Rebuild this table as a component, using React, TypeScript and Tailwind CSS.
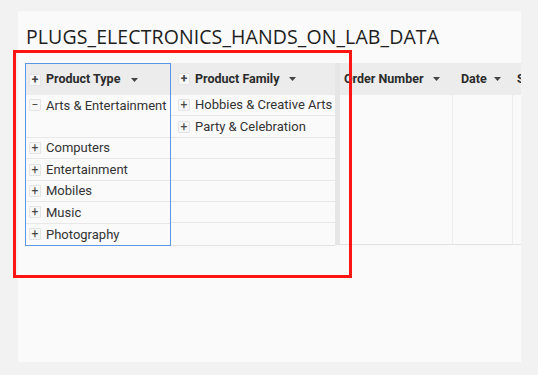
import React from 'react';

const productTypes = ['Computers', 'Entertainment', 'Mobiles', 'Music', 'Photography'];

function ToggleBox({ open = false }: { open?: boolean }) {
    return (
        <span className="flex h-[12px] w-[12px] shrink-0 items-center justify-center rounded-[1px] border border-[#e4e4e4] bg-[#f7f7f7] text-[12px] leading-none text-[#444]">
            {open ? '−' : '+'}
        </span>
    );
}

function Caret() {
    return (
        <svg width="7" height="4" viewBox="0 0 7 4" className="shrink-0">
            <path d="M0 0h7L3.5 4z" fill="#444" />
        </svg>
    );
}

export default function App() {
    return (
        <div className="relative h-[375px] w-[538px] overflow-hidden bg-[#f2f2f2] pl-[18px] pt-[11px]" style={{ fontFamily: 'Roboto, sans-serif' }}>
            <div className="h-[351px] w-[503px] bg-[#fafafa] pl-[7px]">
                <h1 className="pt-[13px] pl-[1px] text-[19.5px] leading-[26px] tracking-[0.1px] text-[#1e1e1e]" style={{ fontFamily: '"Open Sans", sans-serif' }}>
                    PLUGS_ELECTRONICS_HANDS_ON_LAB_DATA
                </h1>

                <div className="mt-[13px] flex w-[496px] text-[13px] text-[#333]">
                    {/* Product Type column (selected) */}
                    <div className="w-[146px] shrink-0 border border-[#5a97e6]">
                        <div className="flex h-[31px] items-center gap-[5px] bg-[#ececec] pl-[3px] text-[12.5px] font-bold text-[#2b2b2b]">
                            <ToggleBox />
                            <span>Product Type</span>
                            <span className="ml-[6px]"><Caret /></span>
                        </div>
                        <div className="flex h-[43px] items-start gap-[5px] border-b border-[#e8e8e8] pl-[3px] pt-[4px]">
                            <ToggleBox open />
                            <span className="-mt-[3px]">Arts &amp; Entertainment</span>
                        </div>
                        {productTypes.map((t, i) => (
                            <div key={t} className={`flex h-[21.4px] items-center gap-[5px] pl-[3px] ${i < productTypes.length - 1 ? 'border-b border-[#e8e8e8]' : ''}`}>
                                <ToggleBox />
                                <span>{t}</span>
                            </div>
                        ))}
                    </div>

                    {/* Product Family column */}
                    <div className="w-[164px] shrink-0 border-b border-[#e2e2e2]">
                        <div className="flex h-[32px] items-center gap-[5px] bg-[#ececec] pl-[7px] text-[12.5px] font-bold text-[#2b2b2b]">
                            <ToggleBox />
                            <span>Product Family</span>
                            <span className="ml-[5px]"><Caret /></span>
                        </div>
                        {['Hobbies & Creative Arts', 'Party & Celebration'].map((f) => (
                            <div key={f} className="flex h-[21.4px] items-center gap-[5px] border-b border-[#e8e8e8] pl-[7px]">
                                <ToggleBox />
                                <span>{f}</span>
                            </div>
                        ))}
                        {[0, 1, 2, 3, 4].map((i) => (
                            <div key={i} className={`h-[21.4px] ${i < 4 ? 'border-b border-[#e8e8e8]' : ''}`} />
                        ))}
                    </div>

                    {/* frozen pane divider */}
                    <div className="h-[182px] w-[5px] shrink-0 border-b border-[#e2e2e2] bg-[#e6e6e6]" />

                    {/* scrolled value columns */}
                    <div className="h-[182px] w-[181px] overflow-hidden border-b border-[#e2e2e2]">
                        <div className="-ml-[10px] flex h-full w-[260px] text-[12.5px] font-bold text-[#2b2b2b]">
                            <div className="w-[123px] shrink-0 border-r border-[#ececec]">
                                <div className="flex h-[32px] items-center gap-[9px] bg-[#ececec] pl-[14px]">
                                    <span>Order Number</span>
                                    <Caret />
                                </div>
                            </div>
                            <div className="w-[60px] shrink-0 border-r border-[#ececec]">
                                <div className="flex h-[32px] items-center gap-[7px] bg-[#ececec] pl-[8px]">
                                    <span>Date</span>
                                    <Caret />
                                </div>
                            </div>
                            <div className="w-[77px] shrink-0">
                                <div className="flex h-[32px] items-center bg-[#ececec] pl-[4px]">
                                    <span>Sales</span>
                                </div>
                            </div>
                        </div>
                    </div>
                </div>
            </div>

            {/* highlight frame */}
            <div className="absolute left-[13px] top-[50px] h-[228px] w-[339px] border-[3px] border-[#ff1414]" />
        </div>
    );
}
